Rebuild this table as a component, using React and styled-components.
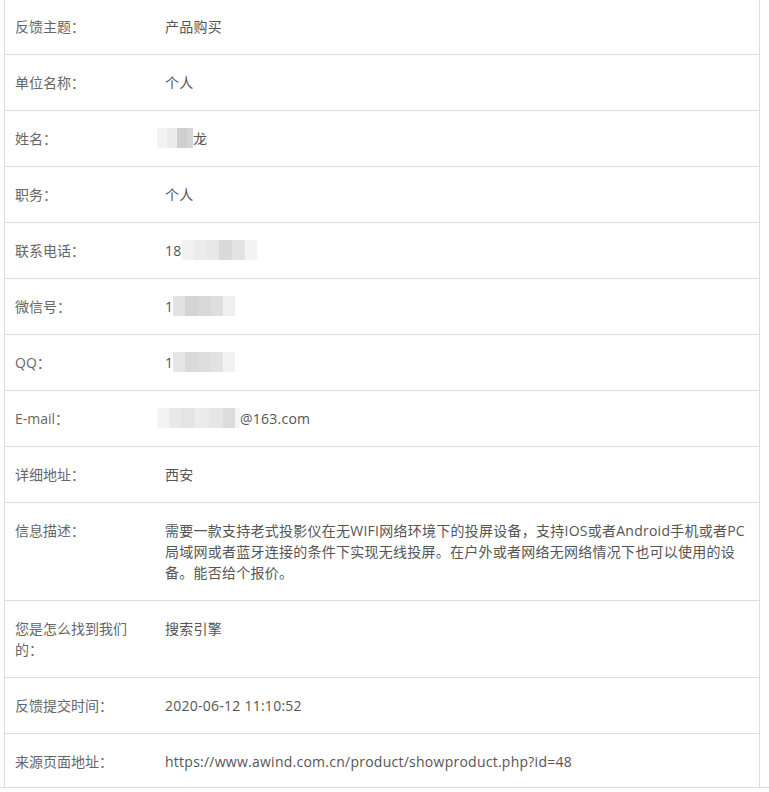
import React from "react";
import styled, { createGlobalStyle } from "styled-components";

const GlobalStyle = createGlobalStyle`
  html, body {
    margin: 0;
    padding: 0;
    background: #fff;
  }
  body {
    font-family: "Open Sans", "Noto Sans CJK SC", sans-serif;
    font-size: 14px;
    color: #666;
  }
`;

const Page = styled.div`
  width: 769px;
  height: 792px;
  overflow: hidden;
  margin-top: -1px;
`;

const Table = styled.div`
  margin-left: 4px;
  width: 754px;
  border-left: 1px solid #ddd;
  border-right: 1px solid #ddd;
`;

const Row = styled.div`
  display: grid;
  grid-template-columns: 148px 1fr;
  border-bottom: 1px solid ${(p) => (p.$last ? "transparent" : "#ddd")};
`;

const Label = styled.div`
  padding: 17px 12px ${(p) => (p.$last ? "14px" : "17px")} 10px;
  line-height: 21px;
  height: auto;
  color: #666;
`;

const Value = styled.div`
  padding: 17px 12px ${(p) => (p.$last ? "14px" : "17px")};
  line-height: 21px;
  color: #555;
  letter-spacing: 0.25px;
  word-break: break-all;
`;

const Divider = styled.div`
  height: 1px;
  background: #ddd;
`;

// blurred mosaic block that hides personal data
const Mosaic = styled.span`
  display: inline-flex;
  vertical-align: top;
  height: 20px;
  margin-left: ${(p) => p.$offset || 0}px;
  filter: blur(0.6px);
`;

const Tile = styled.span`
  display: inline-block;
  width: ${(p) => p.$w}px;
  height: 20px;
  background: ${(p) => p.$c};
`;

const Blur = ({ tiles, offset }) => (
  <Mosaic $offset={offset}>
    {tiles.map(([w, c], i) => (
      <Tile key={i} $w={w} $c={c} />
    ))}
  </Mosaic>
);

const rows = [
  ["反馈主题：", "产品购买"],
  ["单位名称：", "个人"],
  [
    "姓名：",
    <>
      <Blur
        offset={-8}
        tiles={[
          [10, "#f3f3f3"],
          [10, "#ececec"],
          [10, "#cfcfcf"],
          [6, "#d6d6d6"],
        ]}
      />
      龙
    </>,
  ],
  ["职务：", "个人"],
  [
    "联系电话：",
    <>
      18
      <Blur
        tiles={[
          [12, "#f1f1f1"],
          [12, "#ececec"],
          [13, "#e8e8e8"],
          [13, "#dadada"],
          [13, "#e3e3e3"],
          [12, "#f4f4f4"],
        ]}
      />
    </>,
  ],
  [
    "微信号：",
    <>
      1
      <Blur
        tiles={[
          [12, "#e2e2e2"],
          [13, "#d4d4d4"],
          [13, "#d9d9d9"],
          [12, "#dedede"],
          [12, "#f0f0f0"],
        ]}
      />
    </>,
  ],
  [
    "QQ：",
    <>
      1
      <Blur
        tiles={[
          [12, "#e6e6e6"],
          [13, "#dadada"],
          [13, "#dedede"],
          [12, "#e2e2e2"],
          [12, "#f2f2f2"],
        ]}
      />
    </>,
  ],
  [
    "E-mail：",
    <>
      <Blur
        offset={-8}
        tiles={[
          [12, "#f4f4f4"],
          [12, "#e9e9e9"],
          [14, "#e4e4e4"],
          [14, "#ececec"],
          [14, "#e6e6e6"],
          [12, "#dcdcdc"],
          [5, "#f6f6f6"],
        ]}
      />
      @163.com
    </>,
  ],
  ["详细地址：", "西安"],
  [
    "信息描述：",
    "需要一款支持老式投影仪在无WIFI网络环境下的投屏设备，支持IOS或者Android手机或者PC局域网或者蓝牙连接的条件下实现无线投屏。在户外或者网络无网络情况下也可以使用的设备。能否给个报价。",
  ],
  ["您是怎么找到我们的：", "搜索引擎"],
  ["反馈提交时间：", "2020-06-12 11:10:52"],
  ["来源页面地址：", "https://www.awind.com.cn/product/showproduct.php?id=48"],
];

export default function App() {
  return (
    <>
      <GlobalStyle />
      <Page>
        <Table>
          {rows.map(([label, value], i) => {
            const last = i === rows.length - 1;
            return (
              <Row key={i} $last={last}>
                <Label $last={last}>{label}</Label>
                <Value $last={last}>{value}</Value>
              </Row>
            );
          })}
        </Table>
        <Divider />
      </Page>
    </>
  );
}
